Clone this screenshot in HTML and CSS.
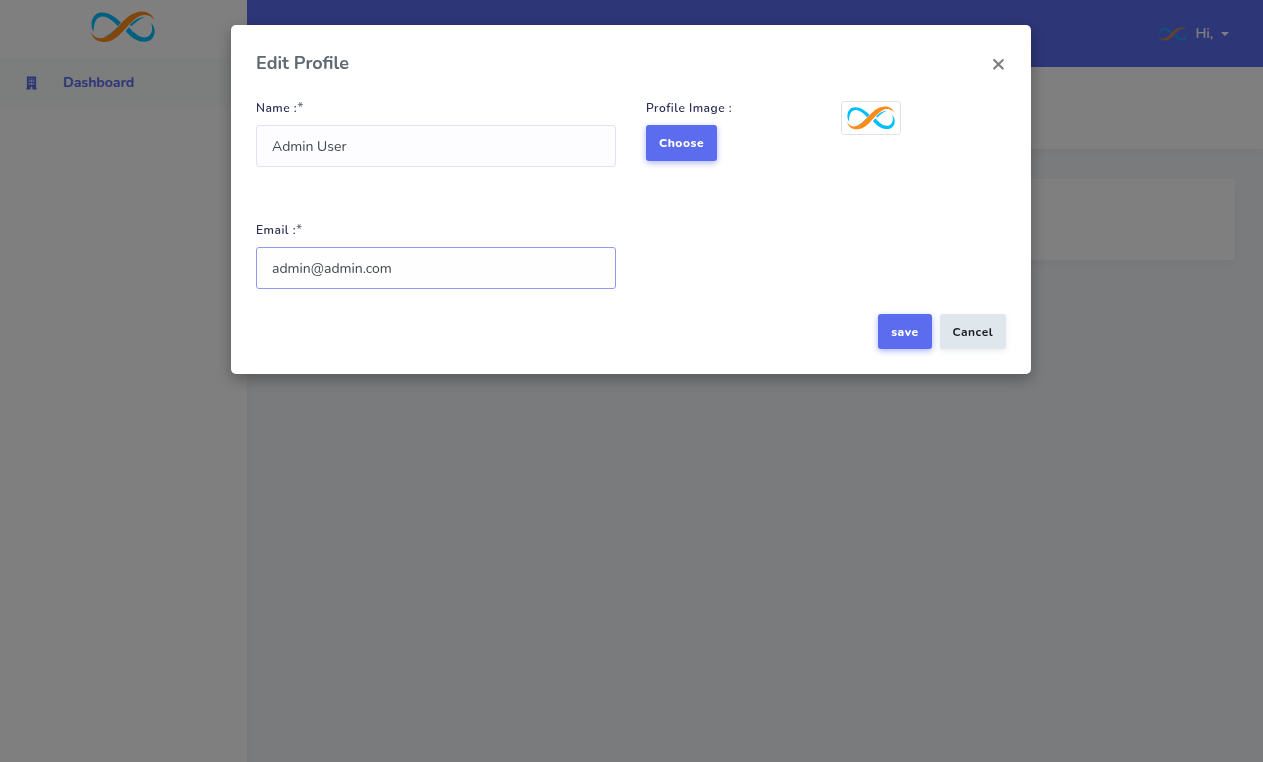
FILE: index.html
```html
<!DOCTYPE html>
<html lang="en">
<head>
<meta charset="utf-8">
<title>Edit Profile</title>
<link rel="stylesheet" href="styles.css">
</head>
<body>
<svg class="defs" aria-hidden="true">
  <symbol id="logo" viewBox="0 0 192 96">
    <path fill="#00bfff" d="M8 62C-3 46 0 20 16 9C40-4 70 14 90 35L80 46C66 28 42 8 22 20C11 28 8 44 8 62Z"/>
    <path fill="#00bfff" d="M36 78C54 74 66 62 80 48C70 66 56 78 36 78Z"/>
    <path fill="#00bfff" d="M116 42C128 30 140 20 160 18C144 25 132 36 121 46Z"/>
    <path fill="#00bfff" d="M104 60L114 49C128 66 148 84 168 78C182 72 188 54 180 36C194 48 195 74 180 86C156 102 124 86 104 60Z"/>
    <path fill="#ff8c1a" d="M1 64C10 84 32 88 54 72C82 52 102 14 134 5C158-3 182 4 190 28C180 12 160 8 142 17C112 34 90 78 58 90C30 99 4 88 1 64Z"/>
  </symbol>
</svg>
<div class="app">
  <aside class="sidebar">
    <a class="brand" href="#" aria-label="Home"><svg class="brand-logo"><use href="#logo"/></svg></a>
    <nav>
      <a class="nav-link" href="#">
        <svg class="nav-icon" viewBox="0 0 12 14" aria-hidden="true"><path fill="currentColor" fill-rule="evenodd" d="M1 0h10v13h1v1H7v-3H5v3H0v-1h1zM3 2v1h1V2zm2 0v1h2V2zm3 0v1h1V2zM3 4v2h1V4zm2 0v2h2V4zm3 0v2h1V4zM3 7v2h1V7zm2 0v2h2V7zm3 0v2h1V7z"/></svg>
        <span>Dashboard</span>
      </a>
    </nav>
  </aside>
  <div class="main">
    <header class="topbar">
      <button class="user" type="button"><svg class="avatar" aria-hidden="true"><use href="#logo"/></svg>Hi,<span class="caret"></span></button>
    </header>
    <div class="page-head"></div>
    <main class="content"><div class="card"></div></main>
  </div>
</div>
<div class="backdrop">
  <section class="modal" role="dialog" aria-modal="true" aria-labelledby="title">
    <div class="modal-head">
      <h1 id="title">Edit Profile</h1>
      <button class="close" type="button" aria-label="Close">×</button>
    </div>
    <form class="modal-body">
      <div class="fields">
        <div class="field">
          <div class="label-row"><label for="name">Name :</label><span class="required">*</span></div>
          <input class="control" id="name" type="text" value="Admin User">
        </div>
        <div class="image-field">
          <div>
            <div class="label-row"><label for="choose">Profile Image :</label></div>
            <button class="btn primary choose" id="choose" type="button">Choose</button>
          </div>
          <div class="thumb"><svg class="thumb-logo" role="img" aria-label="Profile image"><use href="#logo"/></svg></div>
        </div>
        <div class="field">
          <div class="label-row"><label for="email">Email :</label><span class="required">*</span></div>
          <input class="control active" id="email" type="email" value="admin@admin.com">
        </div>
      </div>
      <div class="actions">
        <button class="btn primary" type="submit">save</button>
        <button class="btn light" type="button">Cancel</button>
      </div>
    </form>
  </section>
</div>
</body>
</html>
```
FILE: styles.css
```css
* { box-sizing: border-box; }
body {
  margin: 0;
  font: 14px/24px Nunito, "Open Sans", sans-serif;
  color: #5f6971;
  background: #f4f6f9;
}
button, input { font: inherit; }
.defs { position: absolute; width: 0; height: 0; }
.app { display: flex; min-height: 100vh; }
.sidebar { width: 247px; flex: none; background: #fff; box-shadow: 0 4px 8px rgba(0, 0, 0, .03); }
.brand { display: flex; justify-content: center; padding: 11px 2px 0 0; height: 58px; }
.brand-logo { width: 66px; height: 32px; }
.nav-link {
  display: flex;
  align-items: center;
  gap: 26px;
  height: 49px;
  padding-left: 26px;
  color: #5b6cee;
  background: #f8fafb;
  font-weight: 700;
  text-decoration: none;
}
.nav-icon { width: 11px; height: 14px; }
.main { flex: 1; min-width: 0; }
.topbar { display: flex; justify-content: flex-end; height: 67px; padding: 0 34px; background: #5b6cee; }
.user {
  display: flex;
  align-items: center;
  gap: 8px;
  border: 0;
  padding: 0;
  background: none;
  color: #fff;
  font-weight: 600;
}
.avatar { width: 30px; height: 14px; opacity: .7; }
.caret { border: 4px solid transparent; border-top-color: #fff; border-bottom: 0; }
.page-head { height: 82px; background: #fff; box-shadow: 0 4px 8px rgba(0, 0, 0, .03); }
.content { padding: 30px 28px; }
.card { height: 81px; border-radius: 3px; background: #fff; box-shadow: 0 4px 8px rgba(0, 0, 0, .03); }
.backdrop { position: fixed; inset: 0; padding: 25px 26px 25px 25px; background: rgba(0, 0, 0, .5); }
.modal {
  max-width: 800px;
  margin: 0 auto;
  padding: 25px;
  border-radius: 5px;
  background: #fff;
  box-shadow: 0 5px 15px rgba(0, 0, 0, .3);
}
.modal-head { display: flex; align-items: center; justify-content: space-between; height: 26px; }
h1 { margin: 0; font-size: 18px; line-height: 26px; }
.close { width: 15px; padding: 0; border: 0; background: none; color: #7f7f7f; font-size: 24px; font-weight: 700; line-height: 22px; }
.modal-body { padding-top: 22px; }
.fields { display: grid; grid-template-columns: 1fr 1fr; gap: 53px 30px; }
.label-row { display: flex; height: 20px; margin-bottom: 7px; line-height: 20px; }
label { color: #2a2e52; font-size: 12px; font-weight: 600; letter-spacing: .5px; }
.control {
  display: block;
  width: 100%;
  height: 42px;
  padding: 10px 15px;
  border: 1px solid #e0e2fb;
  border-radius: 3px;
  outline: none;
  color: #3f464d;
  background: #fdfdff;
}
.control.active { border-color: #8f9bf3; background: #fefeff; }
.image-field { display: grid; grid-template-columns: 1fr 1fr; gap: 30px; align-items: start; }
.thumb { display: flex; justify-self: start; margin-top: 3px; padding: 4px; border: 1px solid #dee2e6; border-radius: 3px; background: #fff; }
.thumb-logo { width: 50px; height: 24px; }
.btn { height: 35px; padding: 0 13px; border: 0; border-radius: 3px; font-size: 12px; line-height: 20px; font-weight: 700; letter-spacing: .5px; }
.choose { height: 36px; }
.primary { color: #fff; background: #5b6cee; font-weight: 800; box-shadow: 0 2px 6px #acb5f6; }
.light { color: #191d21; background: #dfe6ec; box-shadow: 0 2px 6px #e6ecf1; }
.actions { display: flex; justify-content: flex-end; gap: 8px; padding-top: 25px; }
```
